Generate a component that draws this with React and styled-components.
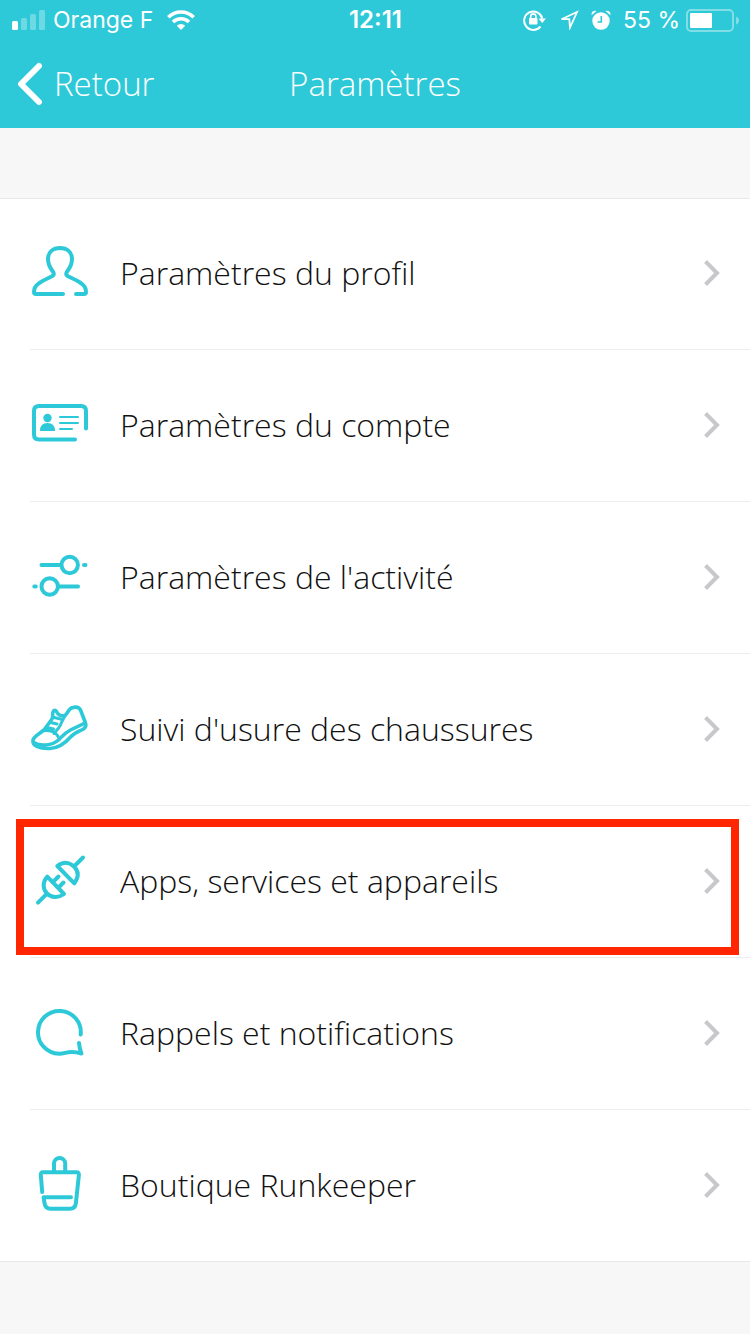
import React from 'react';
import styled, { createGlobalStyle } from 'styled-components';

const GlobalStyle = createGlobalStyle`
  * {
    box-sizing: border-box;
  }

  body {
    margin: 0;
    background: #f7f7f7;
    color: #111;
    font-family: "Open Sans", "Noto Sans", sans-serif;
  }
`;

const Header = styled.header`
  background: #2ec9d8;
  color: #fff;
`;

const StatusBar = styled.div`
  display: grid;
  grid-template-columns: 1fr auto 1fr;
  align-items: center;
  height: 40px;
  padding: 0 11px 0 12px;
  font-family: Inter, "Liberation Sans", sans-serif;
  font-size: 23px;
  line-height: 40px;
`;

const StatusGroup = styled.div`
  display: flex;
  align-items: center;
  justify-content: ${props => (props.$end ? 'flex-end' : 'flex-start')};
  gap: ${props => (props.$end ? '12px' : '8px')};
  white-space: nowrap;
`;

const Carrier = styled.span`
  margin-right: 6px;
`;

const Battery = styled.span`
  display: flex;
  align-items: center;
  gap: 6px;
`;

const Clock = styled.time`
  font-size: 24px;
  font-weight: 600;
`;

const NavBar = styled.nav`
  display: grid;
  grid-template-columns: 1fr auto 1fr;
  align-items: center;
  height: 88px;
  padding: 0 16px;
`;

const BackButton = styled.button`
  display: flex;
  align-items: center;
  justify-self: start;
  gap: 10px;
  padding: 0;
  border: 0;
  background: none;
  color: inherit;
  font: inherit;
  font-size: 33px;
  font-weight: 300;
  line-height: 44px;
  cursor: pointer;
`;

const Title = styled.h1`
  margin: 0;
  font-size: 33px;
  font-weight: 300;
  line-height: 44px;
`;

const Menu = styled.ul`
  margin: 70px 0 0;
  padding: 0;
  list-style: none;
  background: #fff;
`;

const MenuItem = styled.li`
  position: relative;
  padding-left: 30px;

  &:first-child {
    border-top: 1px solid #e8e8e8;
  }

  &:first-child > a {
    height: 151px;
  }

  &:last-child {
    border-bottom: 1px solid #e8e8e8;
  }

  &:last-child > a {
    height: 151px;
    border-bottom: 0;
  }
`;

const MenuLink = styled.a`
  display: flex;
  align-items: center;
  gap: 30px;
  height: 152px;
  padding: 0 30px 2px 0;
  border-bottom: 1px solid #ececec;
  color: inherit;
  font-size: 32px;
  font-weight: 300;
  line-height: 40px;
  text-decoration: none;
`;

const Label = styled.span`
  flex: 1;
`;

const Icon = styled.svg`
  flex: none;
  width: 60px;
  height: 60px;
  fill: none;
  stroke: #2ec9d8;
  stroke-width: 4;
  stroke-linecap: round;
  stroke-linejoin: round;
`;

const Chevron = styled.svg`
  flex: none;
  fill: none;
  stroke: #c7c7cc;
  stroke-width: 4;
`;

const Highlight = styled.div`
  position: absolute;
  inset: 13px 11px 3px 16px;
  border: 8px solid #ff2600;
  pointer-events: none;
`;

const ProfileIcon = () => (
  <Icon viewBox="0 0 60 60">
    <path d="M33 51H6q-2 0-2-2 0-5 4-8c5-4 11-6 14.5-8 2-1.5 1.5-3 0-5C19.5 24 18 20 18 16c0-7 5-11 12-11s12 4 12 11c0 4-1.5 8-4.5 12-1.5 2-2 3.5 0 5 3.5 2 10 4 14.5 8 4 3 4 6 4 8q0 2-2 2H46" />
  </Icon>
);

const AccountIcon = () => (
  <Icon viewBox="0 0 60 60">
    <path d="M45 44.5H9q-5 0-5-5V16q0-5 5-5h42q5 0 5 5v17.5" />
    <path d="M30 22h18M30 28h18M30 34h12" strokeWidth="2" />
    <circle cx="17.5" cy="23" r="4.2" fill="#2ec9d8" stroke="none" />
    <path d="M10 36q0-8 7.5-8t7.5 8z" fill="#2ec9d8" stroke="none" />
  </Icon>
);

const ActivityIcon = () => (
  <Icon viewBox="0 0 60 60">
    <circle cx="39.7" cy="18" r="8.2" />
    <circle cx="19.7" cy="39.5" r="8.2" />
    <path d="M11.5 18H31M54 18h1.5M28.5 39.5H48M4.3 39.5h1.5" />
  </Icon>
);

const ShoeIcon = () => (
  <Icon viewBox="0 0 60 60">
    <path strokeWidth="3.6" d="M3 41c1-4 6-6 11-10L22 20c1.5-3 0-4 1-7 .8-2.5 2.500-2 3.500-.5 2 4 5 5 8.500 4 3-2 3-6 6.500-7.500 4-1.500 7.500-1 9 2l5 13c1 3 0 4.500-2 6-5 2.500-9 3.500-13 8-6 7-12.500 11-20.500 11.500C10 50 2 47 3 41z" />
    <path strokeWidth="3.6" d="M3.500 43.500c7 4 18 3.500 25-2.500 4-4 6-7 12-10l14.500-7" />
    <path strokeWidth="3" d="M14.500 31.500c6-.5 12 1.500 14 7M35 17c-3 4-3.500 8-6 11.500l-5 6M24 18.500l6.500 1.500M20.500 23.500l6.500 1.500M17 28.500l6.500 1.500" />
  </Icon>
);

const PlugIcon = () => (
  <Icon viewBox="0 0 60 60">
    <path d="M17.3 25.7L34 43C28 47.500 21 46.500 17 42.500S12 31.500 17.300 25.700zM8 51.700l9-9" />
    <path d="M23 31l5.500-5.500M28.500 36.500l5-5" />
    <path d="M27.300 15l17 17.300C49 26 48.500 20 44 15.500S33 10.500 27.300 15zM44 15.500L53 6.500" />
  </Icon>
);

const ChatIcon = () => (
  <Icon viewBox="0 0 60 60">
    <path d="M50.7 31.5A21.4 21.4 0 1 0 29 50.700C36 51 38 46.500 51.500 50.500Q49.500 46 49 40" />
  </Icon>
);

const ShopIcon = () => (
  <Icon viewBox="0 0 60 60">
    <path d="M12.2 37L10.8 20q-.3-2.700 2.200-2.700h33.500q2.700 0 2.400 2.700l-3 28q-.6 5.700-6 5.700H20.500q-5 0-5.900-5l-1-6.400H41" />
    <path d="M24 17V8.500a5.600 5.600 0 0 1 11.200 0V17" />
  </Icon>
);

const SignalIcon = () => (
  <svg width="33" height="20" viewBox="0 0 33 20" fill="#fff">
    <rect x="0" y="11" width="6" height="9" rx="1.5" />
    <g opacity="0.3">
      <rect x="9" y="8" width="6" height="12" rx="1.5" />
      <rect x="18" y="4" width="6" height="16" rx="1.5" />
      <rect x="27" y="0" width="6" height="20" rx="1.5" />
    </g>
  </svg>
);

const WifiIcon = () => (
  <svg width="28" height="20" viewBox="0 0 28 20" fill="none" stroke="#fff" strokeWidth="3.6">
    <path d="M1.3 7.2a18 18 0 0 1 25.4 0M6 12a11.5 11.5 0 0 1 16 0" />
    <path d="M14 20l-4.2-4.2a6 6 0 0 1 8.4 0z" fill="#fff" stroke="none" />
  </svg>
);

const LockIcon = () => (
  <svg width="24" height="22" viewBox="0 0 24 22" fill="none" stroke="#fff" strokeWidth="2">
    <path d="M17.5 17.5A9.2 9.2 0 1 1 19.3 9.5" />
    <path d="M15.5 9.5h7.5l-3.7 4.5z" fill="#fff" stroke="none" />
    <rect x="6" y="9" width="8.5" height="6.5" rx="1" fill="#fff" stroke="none" />
    <path d="M7.7 10V7.5a2.6 2.6 0 0 1 5.2 0V10" strokeWidth="1.6" />
  </svg>
);

const LocationIcon = () => (
  <svg width="20" height="20" viewBox="0 0 20 20" fill="none" stroke="#fff" strokeWidth="1.8">
    <path d="M18 2L2.5 9.2H10.3L11 17.5z" />
  </svg>
);

const AlarmIcon = () => (
  <svg width="20" height="20" viewBox="0 0 20 20" fill="#fff">
    <circle cx="10" cy="11" r="8.7" />
    <path d="M.6 5.2Q0 .5 5.5.9zM19.4 5.2Q20 .5 14.5.9z" />
    <path d="M10.3 6v6H6.5" fill="none" stroke="#2ec9d8" strokeWidth="1.6" />
  </svg>
);

const BatteryIcon = () => (
  <svg width="53" height="24" viewBox="0 0 53 24" fill="#fff">
    <rect x="1" y="2" width="46" height="21" rx="4" fill="none" stroke="#fff" strokeWidth="2" opacity="0.4" />
    <rect x="4" y="5" width="22" height="15" rx="1" />
    <path d="M50 8.5q3 1 3 4t-3 4z" opacity="0.4" />
  </svg>
);

const items = [
  { label: 'Paramètres du profil', icon: ProfileIcon },
  { label: 'Paramètres du compte', icon: AccountIcon },
  { label: "Paramètres de l'activité", icon: ActivityIcon },
  { label: "Suivi d'usure des chaussures", icon: ShoeIcon },
  { label: 'Apps, services et appareils', icon: PlugIcon, highlighted: true },
  { label: 'Rappels et notifications', icon: ChatIcon },
  { label: 'Boutique Runkeeper', icon: ShopIcon },
];

const App = () => (
  <>
    <GlobalStyle />
    <Header>
      <StatusBar>
        <StatusGroup>
          <SignalIcon />
          <Carrier>Orange F</Carrier>
          <WifiIcon />
        </StatusGroup>
        <Clock>12:11</Clock>
        <StatusGroup $end>
          <LockIcon />
          <LocationIcon />
          <AlarmIcon />
          <Battery>
            55 %
            <BatteryIcon />
          </Battery>
        </StatusGroup>
      </StatusBar>
      <NavBar>
        <BackButton type="button">
          <svg width="28" height="44" viewBox="0 0 28 44" fill="none" stroke="#fff" strokeWidth="6" strokeLinecap="round" strokeLinejoin="round">
            <path d="M23 4L5 22l18 18" />
          </svg>
          Retour
        </BackButton>
        <Title>Paramètres</Title>
      </NavBar>
    </Header>
    <Menu>
      {items.map(({ label, icon: ItemIcon, highlighted }) => (
        <MenuItem key={label}>
          <MenuLink href="#">
            <ItemIcon />
            <Label>{label}</Label>
            <Chevron width="16" height="28" viewBox="0 0 16 28">
              <path d="M1.5 2.5L13 14 1.5 25.5" />
            </Chevron>
          </MenuLink>
          {highlighted && <Highlight />}
        </MenuItem>
      ))}
    </Menu>
  </>
);

export default App;
